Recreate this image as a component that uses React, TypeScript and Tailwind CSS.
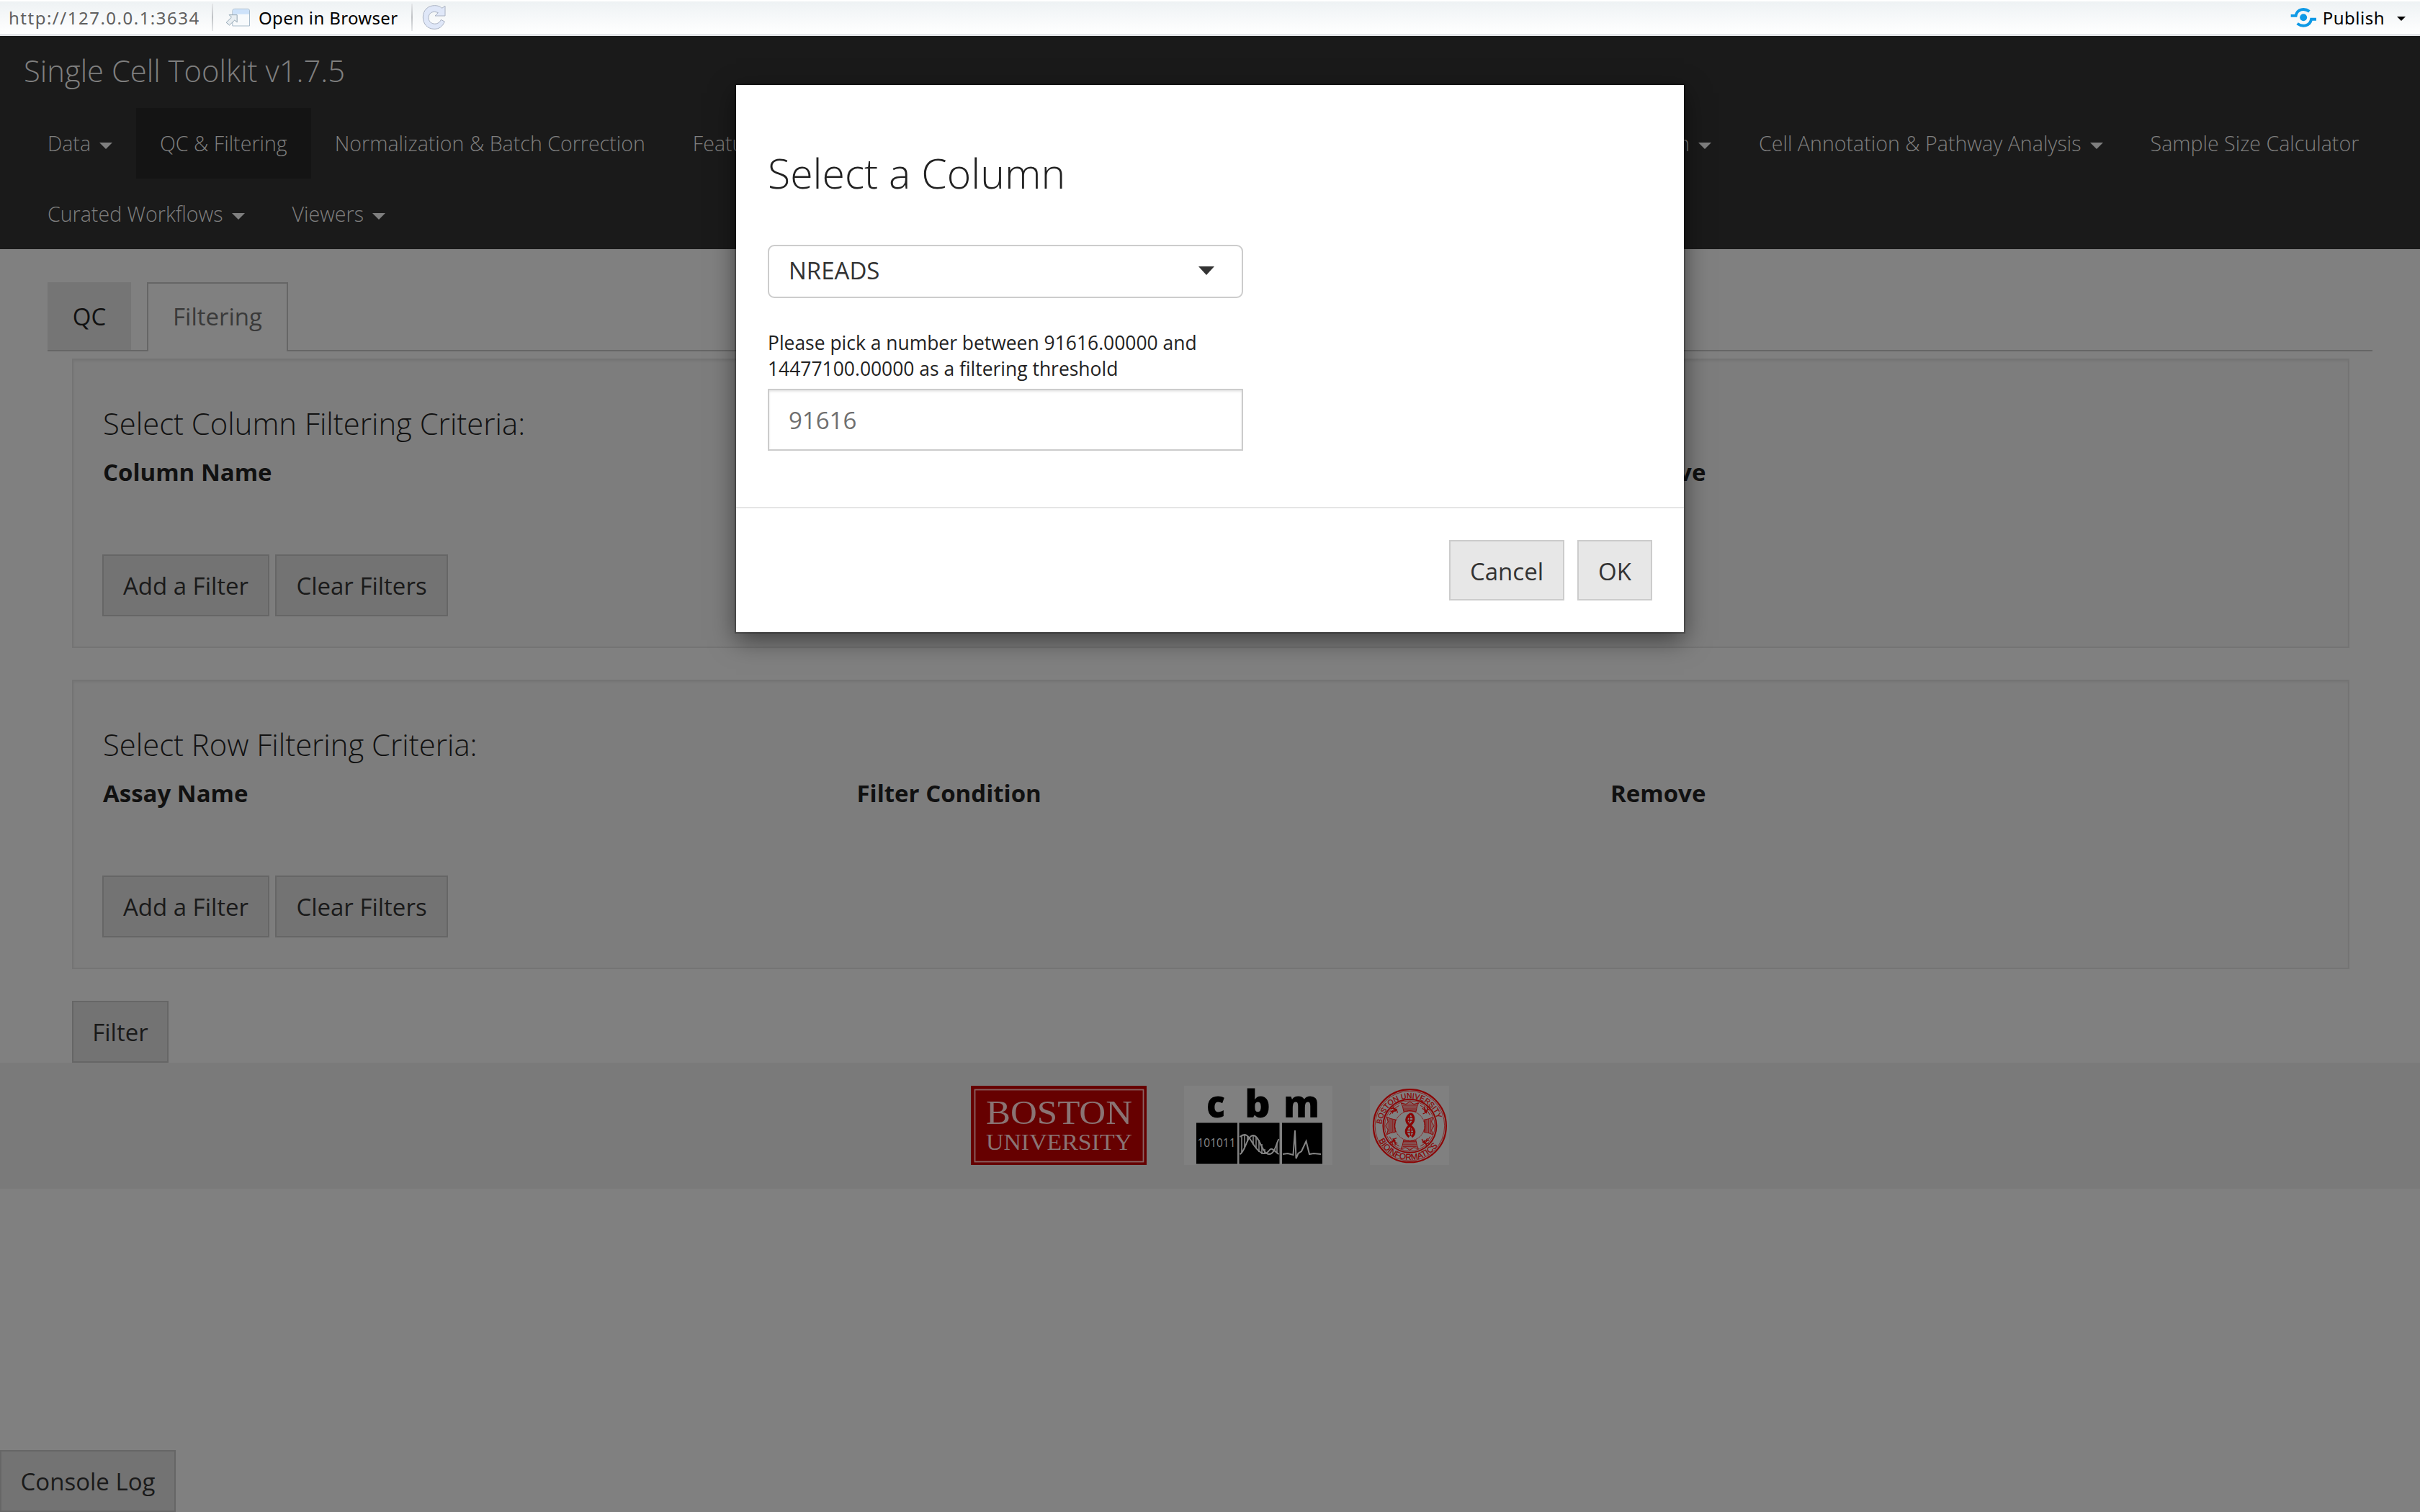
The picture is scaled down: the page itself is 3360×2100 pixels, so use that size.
import type { ReactNode } from "react";

function Caret({ className = "" }: { className?: string }) {
  return (
    <svg viewBox="0 0 18 9" className={`h-[9px] w-[18px] ${className}`} fill="currentColor" aria-hidden="true">
      <path d="M0 0H18L9 9Z" />
    </svg>
  );
}

function OpenIcon() {
  return (
    <svg viewBox="38 38 104 78" className="h-[26px] w-[35px]" strokeLinejoin="round" aria-hidden="true">
      <path d="M67 113V50Q67 42 76 42H130Q138 42 138 50V113Z" fill="#f7fafc" stroke="#a9bccb" strokeWidth="3" />
      <path d="M68.500 64V51Q68.500 43.500 76 43.500H129Q136.500 43.500 136.500 51V64Z" fill="#cde2fa" />
      <path d="M53 67H86V98L76 89L54 110L41 99L63 77Z" fill="#e8eef2" stroke="#93a6b4" strokeWidth="3" />
    </svg>
  );
}

function ReloadIcon() {
  return (
    <svg viewBox="859 18 102 108" className="h-[36px] w-[34px]" strokeLinejoin="round" aria-hidden="true">
      <path
        d="M955 25V66H913L926 53C904 43 886 54 886 74C886 102 926 110 938 82L953 90C943 112 930 121 910 121C880 121 863 98 863 72C863 42 884 23 912 23C925 23 934 27 942 34Z"
        fill="#dfe7f8"
        stroke="#aab2c2"
        strokeWidth="3"
      />
    </svg>
  );
}

function PublishIcon() {
  return (
    <svg viewBox="118 36 112 86" className="h-[29px] w-[37px]" fill="none" stroke="#0d99e6" aria-hidden="true">
      <circle cx="173" cy="78" r="15" fill="#0d99e6" stroke="none" />
      <path d="M120 71H141C147 42 177 38 198 53" strokeWidth="12" />
      <path d="M227 86H206C200 115 169 120 147 104" strokeWidth="12" />
    </svg>
  );
}

function Divider() {
  return <div className="h-[38px] w-[2px] bg-linear-to-b from-[#e6e8ea] via-[#bfc2c5] to-[#e6e8ea]" />;
}

function NavItem({ children, caret, active }: { children: ReactNode; caret?: boolean; active?: boolean }) {
  return (
    <div
      className={`flex h-[98px] items-center whitespace-nowrap px-[33px] text-[28.59px] leading-[98px] font-light text-[#7f7f7f] ${active ? "bg-[#141414]" : ""}`}
    >
      {children}
      {caret && <Caret className="mt-[6px] ml-[12px]" />}
    </div>
  );
}

function DimButton({ children, className = "" }: { children: ReactNode; className?: string }) {
  return (
    <button
      className={`h-[86px] shrink-0 border-2 border-[#666666] bg-[#737373] pt-[2px] text-center text-[33px] leading-[80px] whitespace-nowrap text-[#1a1a1a] ${className}`}
    >
      {children}
    </button>
  );
}

function Panel({ title, columns }: { title: string; columns: string[] }) {
  return (
    <section className="mr-[98px] ml-[100px] h-[402px] border-2 border-[#747474] bg-[#7d7d7d] px-[40px] pt-[58px] shadow-[inset_0_2px_3px_rgba(0,0,0,0.05)]">
      <h4 className="h-[58px] pl-px text-[41.8px] leading-[59px] font-light text-[#111111]">{title}</h4>
      <div className="mt-[17px] flex h-[46px] text-[33px] leading-[46px] font-bold text-[#111111]">
        {columns.map((c) => (
          <div key={c} className="w-[1046.5px] shrink-0 pl-px last:w-auto">
            {c}
          </div>
        ))}
      </div>
      <div className="mt-[91px] flex gap-2">
        <DimButton className="w-[232px]">Add a Filter</DimButton>
        <DimButton className="w-[240px]">Clear Filters</DimButton>
      </div>
    </section>
  );
}

function BostonLogo() {
  return (
    <svg viewBox="0 0 244 110" className="h-[110px] w-[244px]" fontFamily="Liberation Serif, serif">
      <rect width="244" height="110" fill="#660000" />
      <rect x="5.500" y="5.500" width="234" height="100" fill="none" stroke="#8a6262" strokeWidth="1.800" />
      <text x="21" y="53" fontSize="46" fill="#8a7474" textLength="203" lengthAdjust="spacingAndGlyphs">
        BOSTON
      </text>
      <text x="21" y="88.500" fontSize="31" fill="#8a7474" textLength="203" lengthAdjust="spacingAndGlyphs">
        UNIVERSITY
      </text>
    </svg>
  );
}

function CbmLogo() {
  return (
    <svg viewBox="0 0 206 110" className="h-[110px] w-[206px] overflow-visible bg-[#808080]" fontFamily="Open Sans, sans-serif">
      <g fontSize="53" fontWeight="800" fill="#000">
        <text x="31" y="43.500" textLength="26" lengthAdjust="spacingAndGlyphs">c</text>
        <text x="84" y="43.500" textLength="36" lengthAdjust="spacingAndGlyphs">b</text>
        <text x="138" y="43.500" textLength="50" lengthAdjust="spacingAndGlyphs">m</text>
      </g>
      <path d="M17 51.500H74V108.500H17ZM76.500 51.500H132.500V108.500H76.500ZM136 51.500H192V108.500H136Z" fill="#000" />
      <text x="18.500" y="84.500" fontSize="16.500" fill="#8a8a8a" textLength="53" lengthAdjust="spacingAndGlyphs">
        101011
      </text>
      <g fill="none" stroke="#858585">
        <path d="M77.500 95C85 92 87 69 96 69C105 69 108 95 118 95C126 95 128 80 131.500 74" strokeWidth="2" />
        <path d="M77.500 71C88 62 92 76 98 84C106 95 113 97 118 90C122 84 126 92 131.500 95" strokeWidth="2" />
        <path d="M80 70V93M84 68V85M88 70V78M96 69V82M100 71V87M104 75V92M108 81V95M112 88V95M126 87V90M129 79V93" strokeWidth="1.600" />
        <path d="M137 95L144 94L151.500 96L154 62L155.500 101L158.500 94L163 91L169.500 77L174 95L180 94L190 95" strokeWidth="2" />
      </g>
    </svg>
  );
}

function SealLogo() {
  return (
    <svg viewBox="0 0 110 110" className="h-[110px] w-[110px] bg-[#808080]" fontFamily="Liberation Sans, sans-serif">
      <defs>
        <path id="seal-top" d="M16.200 56.500A39.200 39.200 0 0 1 94.600 56.500" />
        <path id="seal-bottom" d="M8.200 60A47.400 47.400 0 0 0 102.600 60" />
      </defs>
      <g fill="none" stroke="#8b0505">
        <circle cx="55.400" cy="55.700" r="50.500" strokeWidth="2.200" />
        <circle cx="55.400" cy="55.700" r="48.300" strokeWidth="0.700" />
        <circle cx="55.400" cy="55.700" r="37" strokeWidth="2" />
        <circle cx="55.400" cy="55.700" r="34.800" strokeWidth="0.700" />
        <circle cx="55.400" cy="55.700" r="20.500" strokeWidth="1" strokeDasharray="1.500 0.700" />
        {[0, 90, 180, 270].map((a) => (
          <g key={a} transform={`rotate(${a} 55.400 55.700)`}>
            <path d="M47 36L45.500 29L43.500 24L50 25.500L55.400 22L61 25.500L67.500 24L65.500 29L64 36Q55.400 33 47 36Z" strokeWidth="1" fill="#8b0505" fillOpacity="0.25" />
            <path d="M46 27H65M46 29.500H65M47 32H64M47 34H64" strokeWidth="0.800" />
            <path d="M29 31.500Q37 30 38.500 37.500M31 38.500Q34 32 38 32.500M32 28.500L36 35M28.500 35.500L36 35" strokeWidth="1.300" />
            <path d="M27 41Q32 32 40.500 27.500" strokeWidth="1" />
          </g>
        ))}
        <path
          d="M57 38.500C49 44 49 50 55.400 55C62.500 60 64 66 58 71M57 38.500C63 44 61.500 50 55.400 55C48.500 60 49 67 54.500 71"
          strokeWidth="3.200"
        />
        <path d="M52 44H60M52 48H60M55 41V51M52 61.500H61M52 65H61M56.500 58V70" strokeWidth="1.500" />
      </g>
      <g fill="#8b0505" stroke="#8b0505" strokeWidth="0.300">
        <text fontSize="10.400">
          <textPath href="#seal-top" startOffset="3">BOSTON UNIVERSITY</textPath>
        </text>
        <text fontSize="11.600">
          <textPath href="#seal-bottom" startOffset="16">BIOINFORMATICS</textPath>
        </text>
      </g>
    </svg>
  );
}

function Toolbar() {
  return (
    <header className="flex h-[50px] items-center border-t-2 border-b-3 border-t-white border-b-[#e4e6e9] bg-linear-to-b from-[#eef2f4] to-white pb-px font-['Noto_Sans','Open_Sans',sans-serif] text-[24px] leading-[45px] whitespace-nowrap text-black">
      <span className="w-[294px] pl-[12px] tracking-[1.5px] text-[#5f5f5f]">http://127.0.0.1:3634</span>
      <Divider />
      <div className="flex w-[275px] items-center pl-[17px]">
        <OpenIcon />
        <span className="ml-[11px] tracking-[0.35px]">Open in Browser</span>
      </div>
      <Divider />
      <div className="ml-[13px]">
        <ReloadIcon />
      </div>
      <div className="ml-auto flex items-center pr-[20px]">
        <PublishIcon />
        <span className="ml-[8px] tracking-[0.5px]">Publish</span>
        <svg viewBox="0 0 12 6" className="mt-[4px] ml-[17px] h-[6px] w-[12px]" aria-hidden="true">
          <path d="M0 0H12L6 6Z" />
        </svg>
      </div>
    </header>
  );
}

function SelectColumnDialog() {
  return (
    <div
      role="dialog"
      className="absolute top-[118px] left-[1022px] flex h-[760px] w-[1316px] flex-col bg-white pt-[82px] text-[#222222] shadow-[0_0_0_2px_rgba(0,0,0,0.25),0_11px_33px_rgba(0,0,0,0.5)]"
    >
      <div className="flex h-[504px] flex-col px-[44px]">
        <h3 className="h-[80px] text-[57.2px] leading-[80px] font-light">Select a Column</h3>
        <div className="mt-[60px] flex h-[74px] w-[660px] items-center justify-between rounded-[9px] border-2 border-[#cccccc] pr-[38px] pl-[27px] text-[33px] leading-[70px] text-[#333333]">
          <span className="mb-[2px] leading-[68px]">NREADS</span>
          <svg viewBox="0 0 22 12" className="mb-[2px] h-[12px] w-[22px]" fill="#333333" aria-hidden="true">
            <path d="M0 0H22L11 12Z" />
          </svg>
        </div>
        <p className="mt-[44px] text-[26.45px] leading-[36px]">
          Please pick a number between 91616.00000 and
          <br />
          14477100.00000 as a filtering threshold
        </p>
        <div className="mt-[10px] h-[86px] w-[660px] border-2 border-[#cccccc] pt-px pl-[27px] text-[33px] leading-[82px] text-[#6f6f6f] shadow-[inset_0_2px_3px_rgba(0,0,0,0.1)]">
          91616
        </div>
      </div>
      <div className="flex h-[174px] justify-end gap-[18px] border-t-2 border-[#e5e5e5] pt-[44px] pr-[44px] text-[33px] leading-[77px] text-[#333333]">
        <button className="h-[84px] w-[160px] border-2 border-[#cccccc] bg-[#e7e7e7] pt-[3px]">Cancel</button>
        <button className="h-[84px] w-[104px] border-2 border-[#cccccc] bg-[#e7e7e7] pt-[3px]">OK</button>
      </div>
    </div>
  );
}

export default function App() {
  return (
    <div className="relative flex h-[2100px] w-[3360px] flex-col overflow-hidden bg-[#808080] font-['Open_Sans',sans-serif]">
      <Toolbar />
      <nav className="h-[296px] bg-[#1a1a1a]">
        <div className="mb-[5px] h-[95px] pl-[33px] text-[41.8px] leading-[95px] font-light text-[#7f7f7f]">Single Cell Toolkit v1.7.5</div>
        <div className="flex flex-wrap pl-[33px]">
          <NavItem caret>Data</NavItem>
          <NavItem active>QC &amp; Filtering</NavItem>
          <NavItem>Normalization &amp; Batch Correction</NavItem>
          <NavItem>Feature Selection &amp; Dimensionality Reduction</NavItem>
          <NavItem>Clustering</NavItem>
          <NavItem caret>Differential Expression &amp; Marker Selection</NavItem>
          <NavItem caret>Cell Annotation &amp; Pathway Analysis</NavItem>
          <NavItem>Sample Size Calculator</NavItem>
          <NavItem caret>Curated Workflows</NavItem>
          <NavItem caret>Viewers</NavItem>
        </div>
      </nav>

      <div className="mx-[66px] mt-[46px] flex h-[96px] text-[33px] leading-[92px]">
        <div className="w-[116px] border-b-2 border-[#666666] bg-[#757575] pt-[2px] text-center text-[#111111]">QC</div>
        <div className="w-[22px] border-b-2 border-[#666666]" />
        <div className="w-[196px] border-2 border-b-0 border-[#666666] text-center text-[#3a3a3a]">Filtering</div>
        <div className="flex-1 border-b-2 border-[#666666]" />
      </div>

      <main className="mt-[10px] flex flex-col">
        <Panel title="Select Column Filtering Criteria:" columns={["Column Name", "Filter Condition", "Remove"]} />
        <div className="h-[44px]" />
        <Panel title="Select Row Filtering Criteria:" columns={["Assay Name", "Filter Condition", "Remove"]} />
        <DimButton className="mt-[44px] ml-[100px] w-[134px]">Filter</DimButton>
      </main>

      <footer className="flex h-[175px] shrink-0 items-start bg-[#7a7a7a] pt-[32px] pl-[1348px]">
        <BostonLogo />
        <div className="ml-[52px]">
          <CbmLogo />
        </div>
        <div className="ml-[52px]">
          <SealLogo />
        </div>
      </footer>

      <DimButton className="mt-auto w-[244px]">Console Log</DimButton>
      <SelectColumnDialog />
    </div>
  );
}
